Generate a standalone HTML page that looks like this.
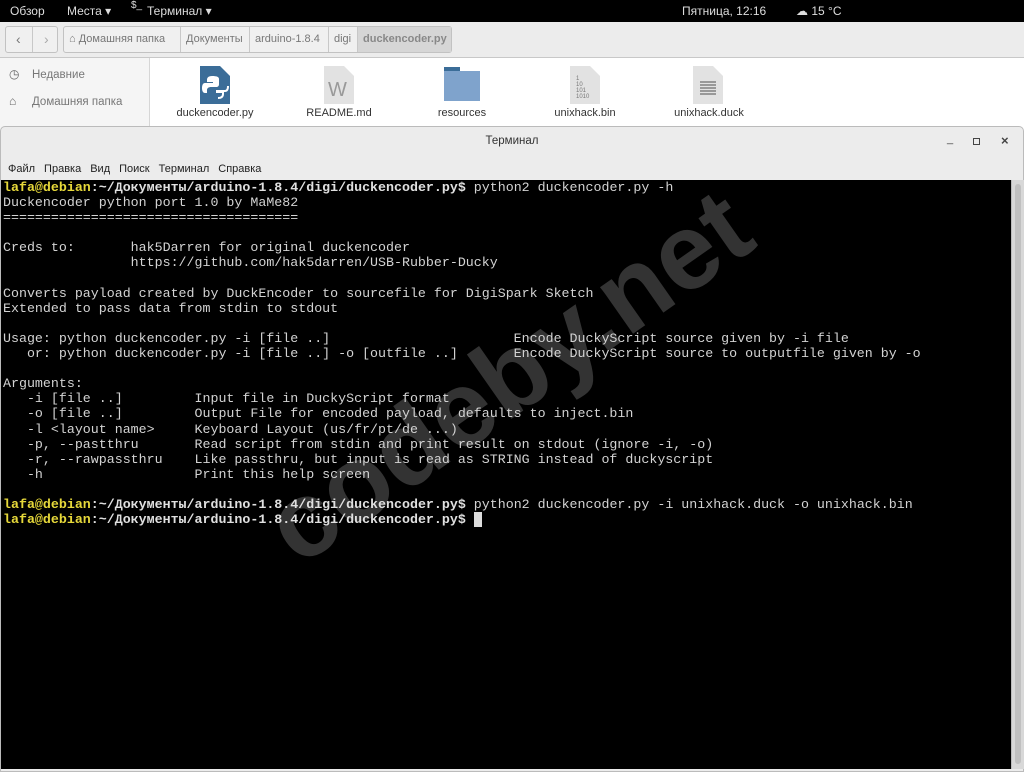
<!DOCTYPE html>
<html><head><meta charset="utf-8"><style>
*{margin:0;padding:0;box-sizing:border-box}
body{width:1024px;height:772px;overflow:hidden;background:#ededed;font-family:"Liberation Sans","DejaVu Sans",sans-serif;position:relative}
.top{position:absolute;left:0;top:0;width:1024px;height:22px;background:#000;color:#ddd;font-size:12px}
.top span{position:absolute;top:4px;white-space:nowrap}
.fm{position:absolute;left:0;top:22px;width:1024px;height:110px;background:#fff}
.tb{position:absolute;left:0;top:0;width:1024px;height:36px;background:#ececec;border-bottom:1px solid #c8c8c8}
.btn{position:absolute;top:4px;height:27px;border:1px solid #c2c2c2;border-radius:3px;background:#f0f0f0;font-size:11px;color:#777}
.crumb{position:absolute;top:0;height:25px;line-height:25px;padding:0 5px;border-right:1px solid #c8c8c8;white-space:nowrap;overflow:hidden}
.side{position:absolute;left:0;top:36px;width:150px;height:80px;background:#f5f5f5;border-right:1px solid #d6d6d6;font-size:11.5px;color:#777}
.side div{position:absolute;left:32px;white-space:nowrap}
.file{position:absolute;top:85px;font-size:11px;color:#333;text-align:center;width:100px}
.term{position:absolute;left:0;top:126px;width:1024px;height:646px;background:#ececec;border:1px solid #bbb;border-radius:5px 5px 0 0}
.title{position:absolute;left:0;top:8px;width:1022px;text-align:center;font-size:11.5px;color:#333}
.menu{position:absolute;left:7px;top:36px;font-size:11px;color:#222}
.menu span{margin-right:9px}
.con{position:absolute;left:1px;top:180px;width:1010px;height:589px;background:#000;overflow:hidden}
.scroll{position:absolute;left:1011px;top:180px;width:13px;height:589px;background:#d8d8d8;border-left:1px solid #bbb}
pre{position:absolute;left:2px;top:0px;font-family:"Liberation Mono","DejaVu Sans Mono",monospace;font-size:13.3px;line-height:15.1px;color:#d3d3d3;white-space:pre}
.y{color:#e6d83a;font-weight:bold}.w{color:#e0e0e0;font-weight:bold}
</style></head><body>
<div class="top">
<span style="left:10px">Обзор</span>
<span style="left:67px">Места ▾</span>
<span style="left:131px;top:0;font-size:10px">$_</span>
<span style="left:147px">Терминал ▾</span>
<span style="left:682px">Пятница, 12:16</span>
<span style="left:796px">☁ 15 °C</span>
</div>
<div class="fm">
<div class="tb">
<div class="btn" style="left:5px;width:53px"><span style="position:absolute;left:10px;top:4px;font-size:14px">‹</span><span style="position:absolute;left:26px;top:0;width:1px;height:25px;background:#c8c8c8"></span><span style="position:absolute;left:38px;top:4px;font-size:14px;color:#aaa">›</span></div>
<div class="btn" style="left:63px;width:389px">
<div class="crumb" style="left:0;width:117px">⌂ Домашняя папка</div>
<div class="crumb" style="left:117px;width:69px">Документы</div>
<div class="crumb" style="left:186px;width:79px">arduino-1.8.4</div>
<div class="crumb" style="left:265px;width:29px">digi</div>
<div class="crumb" style="left:294px;width:93px;background:#d6d6d6;font-weight:bold;color:#888;border:none">duckencoder.py</div>
</div>
</div>
<div class="side">
<div style="top:11px">Недавние</div><span style="position:absolute;left:9px;top:9px;font-size:12px;color:#666">◷</span>
<div style="top:38px">Домашняя папка</div><span style="position:absolute;left:9px;top:36px;font-size:12px;color:#666">⌂</span>
</div>
<svg style="position:absolute;left:200px;top:44px" width="30" height="38"><path d="M0 0h20l10 10v28H0z" fill="#3b6d98"/><path d="M12 10c-4 0-5 2-5 4v2h6v1H5c-2 0-3 2-3 5s1 5 3 5h2v-3c0-2 2-3 4-3h5c2 0 3-1 3-3v-5c0-2-2-3-7-3z" fill="#fff"/><path d="M18 32c4 0 5-2 5-4v-2h-6v-1h8c2 0 3-2 3-5" stroke="#fff" stroke-width="2" fill="none"/></svg>
<svg style="position:absolute;left:324px;top:44px" width="30" height="38"><path d="M0 0h20l10 10v28H0z" fill="#e2e2e2"/><text x="4" y="30" font-size="20" fill="#999" font-family="Liberation Sans">W</text></svg>
<svg style="position:absolute;left:444px;top:45px" width="36" height="34"><rect x="0" y="0" width="16" height="6" fill="#3b6d98"/><rect x="0" y="4" width="36" height="30" fill="#7fa3cc"/></svg>
<svg style="position:absolute;left:570px;top:44px" width="30" height="38"><path d="M0 0h20l10 10v28H0z" fill="#e2e2e2"/><text x="6" y="14" font-size="6" fill="#777">1</text><text x="6" y="20" font-size="6" fill="#777">10</text><text x="6" y="26" font-size="6" fill="#777">101</text><text x="6" y="32" font-size="6" fill="#777">1010</text></svg>
<svg style="position:absolute;left:693px;top:44px" width="30" height="38"><path d="M0 0h20l10 10v28H0z" fill="#e2e2e2"/><path d="M7 16h16M7 19h16M7 22h16M7 25h16M7 28h16" stroke="#999" stroke-width="2"/></svg>
<div class="file" style="left:165px">duckencoder.py</div>
<div class="file" style="left:289px">README.md</div>
<div class="file" style="left:412px">resources</div>
<div class="file" style="left:535px">unixhack.bin</div>
<div class="file" style="left:659px">unixhack.duck</div>
</div>
<div class="term">
<div class="title">Терминал</div>
<div style="position:absolute;left:946px;top:6px;font-size:11px;color:#444">_</div>
<div style="position:absolute;left:972px;top:11px;width:7px;height:7px;border:1.5px solid #444"></div>
<div style="position:absolute;left:1000px;top:6px;font-size:13px;color:#444;font-weight:bold">×</div>
<div class="menu"><span>Файл</span><span>Правка</span><span>Вид</span><span>Поиск</span><span>Терминал</span><span>Справка</span></div>
</div>
<div class="con">
<svg style="position:absolute;left:0;top:0" width="1010" height="589"><text x="0" y="0" transform="translate(512,203) rotate(-35)" text-anchor="middle" dominant-baseline="middle" font-family="Liberation Sans" font-weight="bold" font-size="108" fill="#333">codeby.net</text></svg>
<pre><span class="y">lafa@debian</span><span class="w">:~/Документы/arduino-1.8.4/digi/duckencoder.py$</span> python2 duckencoder.py -h
Duckencoder python port 1.0 by MaMe82
=====================================

Creds to:       hak5Darren for original duckencoder
                https://github.com/hak5darren/USB-Rubber-Ducky

Converts payload created by DuckEncoder to sourcefile for DigiSpark Sketch
Extended to pass data from stdin to stdout

Usage: python duckencoder.py -i [file ..]                       Encode DuckyScript source given by -i file
   or: python duckencoder.py -i [file ..] -o [outfile ..]       Encode DuckyScript source to outputfile given by -o

Arguments:
   -i [file ..]         Input file in DuckyScript format
   -o [file ..]         Output File for encoded payload, defaults to inject.bin
   -l &lt;layout name&gt;     Keyboard Layout (us/fr/pt/de ...)
   -p, --pastthru       Read script from stdin and print result on stdout (ignore -i, -o)
   -r, --rawpassthru    Like passthru, but input is read as STRING instead of duckyscript
   -h                   Print this help screen

<span class="y">lafa@debian</span><span class="w">:~/Документы/arduino-1.8.4/digi/duckencoder.py$</span> python2 duckencoder.py -i unixhack.duck -o unixhack.bin
<span class="y">lafa@debian</span><span class="w">:~/Документы/arduino-1.8.4/digi/duckencoder.py$</span> <span style="background:#ddd">&nbsp;</span></pre>
</div>
<div class="scroll"><div style="position:absolute;left:3px;top:4px;width:6px;height:580px;background:#c0c0c0;border-radius:3px"></div></div>
</body></html>
